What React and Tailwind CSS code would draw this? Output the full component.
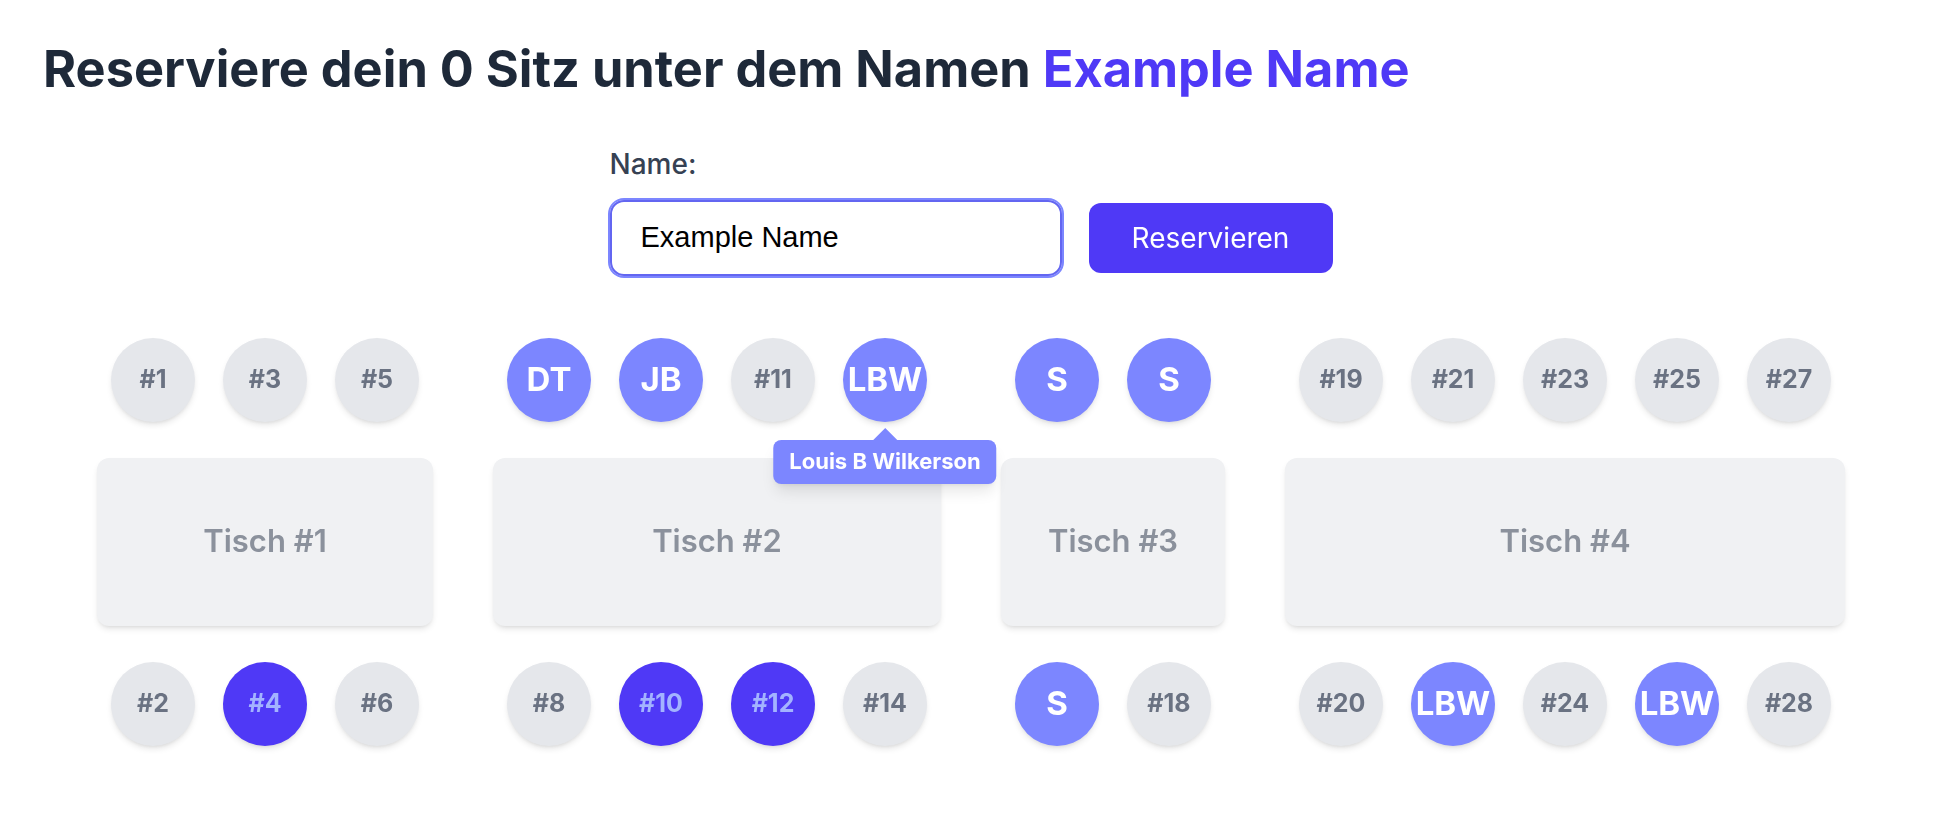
import React, { useEffect, useRef } from "react";

const tables = [
  {
    name: "Tisch #1",
    top: [{ l: "#1" }, { l: "#3" }, { l: "#5" }],
    bottom: [{ l: "#2" }, { l: "#4", s: "sel" }, { l: "#6" }],
  },
  {
    name: "Tisch #2",
    top: [
      { l: "DT", s: "res" },
      { l: "JB", s: "res" },
      { l: "#11" },
      { l: "LBW", s: "res", tip: "Louis B Wilkerson" },
    ],
    bottom: [{ l: "#8" }, { l: "#10", s: "sel" }, { l: "#12", s: "sel" }, { l: "#14" }],
  },
  {
    name: "Tisch #3",
    top: [
      { l: "S", s: "res" },
      { l: "S", s: "res" },
    ],
    bottom: [{ l: "S", s: "res" }, { l: "#18" }],
  },
  {
    name: "Tisch #4",
    top: [{ l: "#19" }, { l: "#21" }, { l: "#23" }, { l: "#25" }, { l: "#27" }],
    bottom: [
      { l: "#20" },
      { l: "LBW", s: "res" },
      { l: "#24" },
      { l: "LBW", s: "res" },
      { l: "#28" },
    ],
  },
];

function Seat({ seat }) {
  let cls = "bg-[#e5e7eb] text-[#6a7282] text-[25px] font-bold";
  if (seat.s === "res") cls = "bg-[#7c86ff] text-white text-[33px] font-bold";
  if (seat.s === "sel") cls = "bg-[#4f39f6] text-[#a3b3ff] text-[25px] font-bold";
  return (
    <div className="relative">
      <div
        className={
          "w-[84px] h-[84px] rounded-full flex items-center justify-center shadow-md leading-none " +
          cls
        }
      >
        {seat.l}
      </div>
      {seat.tip && (
        <div className="absolute left-1/2 -translate-x-1/2 top-[90px] z-10 flex flex-col items-center">
          <div className="w-0 h-0 border-l-[12px] border-r-[12px] border-b-[12px] border-l-transparent border-r-transparent border-b-[#7c86ff]"></div>
          <div className="h-[44px] px-[16px] rounded-lg bg-[#7c86ff] text-white text-[22px] font-bold flex items-center whitespace-nowrap shadow-lg">
            {seat.tip}
          </div>
        </div>
      )}
    </div>
  );
}

function Table({ t }) {
  return (
    <div className="flex flex-col gap-[36px]">
      <div className="flex gap-[28px] px-[14px]">
        {t.top.map((s, i) => (
          <Seat key={i} seat={s} />
        ))}
      </div>
      <div className="h-[168px] rounded-xl bg-[#f0f1f3] shadow-md flex items-center justify-center text-[31px] font-semibold text-[#8b919c]">
        {t.name}
      </div>
      <div className="flex gap-[28px] px-[14px]">
        {t.bottom.map((s, i) => (
          <Seat key={i} seat={s} />
        ))}
      </div>
    </div>
  );
}

export default function App() {
  const ref = useRef(null);
  useEffect(() => {
    const el = ref.current;
    if (el) {
      el.focus();
      const n = el.value.length;
      el.setSelectionRange(n, n);
    }
  }, []);
  return (
    <div
      className="min-h-screen bg-white pt-[44px]"
      style={{ fontFamily: "Inter, 'Noto Sans', sans-serif" }}
    >
      <h1 className="px-[43px] text-[50.5px] leading-none font-bold text-[#1e2939]">
        Reserviere dein 0 Sitz unter dem Namen{" "}
        <span className="text-[#4f39f6]">Example Name</span>
      </h1>

      <div className="flex justify-center mt-[55px] pl-[5px]">
        <div className="flex flex-col">
          <label className="text-[28px] leading-none font-medium text-[#364153] mb-[22px]">
            Name:
          </label>
          <div className="flex items-center gap-[27px]">
            <input
              ref={ref}
              defaultValue="Example Name"
              className="w-[452px] h-[76px] rounded-[14px] border-2 border-[#6366f1] ring-2 ring-[#7c86ff] outline-none pl-[29px] text-[29px] text-black caret-black"
              style={{ fontFamily: "'Liberation Sans', Arial, sans-serif" }}
            />
            <button className="w-[244px] h-[70px] rounded-xl bg-[#4f39f6] text-white text-[28px] font-normal">
              Reservieren
            </button>
          </div>
        </div>
      </div>

      <div className="flex justify-center gap-[60px] mt-[62px] pl-[5px]">
        {tables.map((t, i) => (
          <Table key={i} t={t} />
        ))}
      </div>
    </div>
  );
}
